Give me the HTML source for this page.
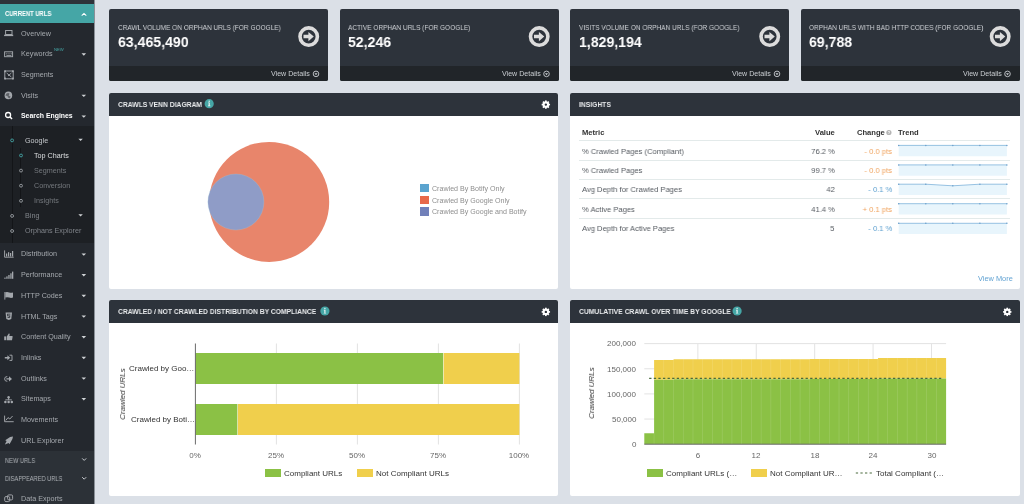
<!DOCTYPE html><html><head><meta charset="utf-8"><style>
html,body{margin:0;padding:0;}
body{width:1024px;height:504px;overflow:hidden;position:relative;background:#dbe0e7;font-family:"Liberation Sans", sans-serif;}
.t{position:absolute;white-space:nowrap;will-change:transform;}
svg{position:absolute;overflow:visible;}
</style></head><body>
<div style="position:absolute;left:0px;top:0px;width:94px;height:504px;background:#24282e;"></div>
<div style="position:absolute;left:94px;top:0px;width:1px;height:504px;background:#8a9097;"></div>
<div style="position:absolute;left:0px;top:0px;width:94px;height:4.2px;background:#2e333a;"></div>
<div style="position:absolute;left:0px;top:4.2px;width:94px;height:18.7px;background:#45a6a6;"></div>
<div class="t" style="left:4.80px;transform-origin:0 0;transform: scaleX(0.93);top:11px;font-size:6.3px;line-height:6.3px;color:#ffffff;font-weight:700;">CURRENT URLS</div>
<svg style="left:0;top:0" width="95" height="30"><path d="M81.7 15.6 L84 13.4 L86.3 15.6" stroke="#fff" stroke-width="1.05" fill="none"/></svg>
<div class="t" style="left:21.30px;transform-origin:0 0;top:30px;font-size:7.2px;line-height:7.2px;color:#a5a9ae;font-weight:400;">Overview</div>
<div class="t" style="left:21.30px;transform-origin:0 0;top:50px;font-size:7.2px;line-height:7.2px;color:#a5a9ae;font-weight:400;">Keywords</div>
<svg style="left:0;top:0" width="95" height="504"><path d="M81.50 53.30 L86.10 53.30 L83.80 55.70 Z" fill="#d0d3d6"/></svg>
<div class="t" style="left:21.30px;transform-origin:0 0;top:71px;font-size:7.2px;line-height:7.2px;color:#a5a9ae;font-weight:400;">Segments</div>
<div class="t" style="left:21.30px;transform-origin:0 0;top:92px;font-size:7.2px;line-height:7.2px;color:#a5a9ae;font-weight:400;">Visits</div>
<svg style="left:0;top:0" width="95" height="504"><path d="M81.50 94.70 L86.10 94.70 L83.80 97.10 Z" fill="#d0d3d6"/></svg>
<div class="t" style="left:21.30px;transform-origin:0 0;top:113px;font-size:6.9px;line-height:6.9px;color:#ffffff;font-weight:700;">Search Engines</div>
<svg style="left:0;top:0" width="95" height="504"><path d="M81.50 115.40 L86.10 115.40 L83.80 117.80 Z" fill="#d0d3d6"/></svg>
<div class="t" style="left:54.00px;transform-origin:0 0;top:48px;font-size:4.2px;line-height:4.2px;color:#45a6a6;font-weight:400;">NEW</div>
<div style="position:absolute;left:0px;top:126px;width:94px;height:117.4px;background:#1d2024;"></div>
<div style="position:absolute;left:11.6px;top:126px;width:1px;height:117.4px;background:#131518;"></div>
<div style="position:absolute;left:19.8px;top:147.8px;width:1px;height:59.4px;background:#131518;"></div>
<div class="t" style="left:25.00px;transform-origin:0 0;top:137px;font-size:7.2px;line-height:7.2px;color:#c4c7cb;font-weight:400;">Google</div>
<svg style="left:0;top:0" width="95" height="504"><circle cx="12.1" cy="140.40" r="1.45" stroke="#45a6a6" stroke-width="0.9" fill="#1d2024"/></svg>
<svg style="left:0;top:0" width="95" height="504"><path d="M78.40 138.75 L82.80 138.75 L80.60 141.05 Z" fill="#d0d3d6"/></svg>
<div class="t" style="left:34.00px;transform-origin:0 0;top:152px;font-size:7.2px;line-height:7.2px;color:#dcdee0;font-weight:400;">Top Charts</div>
<svg style="left:0;top:0" width="95" height="504"><circle cx="21" cy="155.50" r="1.45" stroke="#45a6a6" stroke-width="0.9" fill="#1d2024"/></svg>
<div class="t" style="left:34.00px;transform-origin:0 0;top:167px;font-size:7.2px;line-height:7.2px;color:#74787d;font-weight:400;">Segments</div>
<svg style="left:0;top:0" width="95" height="504"><circle cx="21" cy="170.60" r="1.45" stroke="#9a9ea3" stroke-width="0.9" fill="#1d2024"/></svg>
<div class="t" style="left:34.00px;transform-origin:0 0;top:182px;font-size:7.2px;line-height:7.2px;color:#74787d;font-weight:400;">Conversion</div>
<svg style="left:0;top:0" width="95" height="504"><circle cx="21" cy="185.70" r="1.45" stroke="#9a9ea3" stroke-width="0.9" fill="#1d2024"/></svg>
<div class="t" style="left:34.00px;transform-origin:0 0;top:197px;font-size:7.2px;line-height:7.2px;color:#74787d;font-weight:400;">Insights</div>
<svg style="left:0;top:0" width="95" height="504"><circle cx="21" cy="200.80" r="1.45" stroke="#9a9ea3" stroke-width="0.9" fill="#1d2024"/></svg>
<div class="t" style="left:25.00px;transform-origin:0 0;top:212px;font-size:7.2px;line-height:7.2px;color:#80848a;font-weight:400;">Bing</div>
<svg style="left:0;top:0" width="95" height="504"><circle cx="12.1" cy="215.90" r="1.45" stroke="#9a9ea3" stroke-width="0.9" fill="#1d2024"/></svg>
<svg style="left:0;top:0" width="95" height="504"><path d="M78.40 214.25 L82.80 214.25 L80.60 216.55 Z" fill="#d0d3d6"/></svg>
<div class="t" style="left:25.00px;transform-origin:0 0;top:227px;font-size:7.2px;line-height:7.2px;color:#80848a;font-weight:400;">Orphans Explorer</div>
<svg style="left:0;top:0" width="95" height="504"><circle cx="12.1" cy="231.00" r="1.45" stroke="#9a9ea3" stroke-width="0.9" fill="#1d2024"/></svg>
<div class="t" style="left:21.30px;transform-origin:0 0;top:250px;font-size:7.2px;line-height:7.2px;color:#a5a9ae;font-weight:400;">Distribution</div>
<svg style="left:0;top:0" width="95" height="504"><path d="M81.50 253.40 L86.10 253.40 L83.80 255.80 Z" fill="#d0d3d6"/></svg>
<div class="t" style="left:21.30px;transform-origin:0 0;top:271px;font-size:7.2px;line-height:7.2px;color:#a5a9ae;font-weight:400;">Performance</div>
<svg style="left:0;top:0" width="95" height="504"><path d="M81.50 274.07 L86.10 274.07 L83.80 276.47 Z" fill="#d0d3d6"/></svg>
<div class="t" style="left:21.30px;transform-origin:0 0;top:292px;font-size:7.2px;line-height:7.2px;color:#a5a9ae;font-weight:400;">HTTP Codes</div>
<svg style="left:0;top:0" width="95" height="504"><path d="M81.50 294.74 L86.10 294.74 L83.80 297.14 Z" fill="#d0d3d6"/></svg>
<div class="t" style="left:21.30px;transform-origin:0 0;top:313px;font-size:7.2px;line-height:7.2px;color:#a5a9ae;font-weight:400;">HTML Tags</div>
<svg style="left:0;top:0" width="95" height="504"><path d="M81.50 315.41 L86.10 315.41 L83.80 317.81 Z" fill="#d0d3d6"/></svg>
<div class="t" style="left:21.30px;transform-origin:0 0;top:333px;font-size:7.2px;line-height:7.2px;color:#a5a9ae;font-weight:400;">Content Quality</div>
<svg style="left:0;top:0" width="95" height="504"><path d="M81.50 336.08 L86.10 336.08 L83.80 338.48 Z" fill="#d0d3d6"/></svg>
<div class="t" style="left:21.30px;transform-origin:0 0;top:354px;font-size:7.2px;line-height:7.2px;color:#a5a9ae;font-weight:400;">Inlinks</div>
<svg style="left:0;top:0" width="95" height="504"><path d="M81.50 356.75 L86.10 356.75 L83.80 359.15 Z" fill="#d0d3d6"/></svg>
<div class="t" style="left:21.30px;transform-origin:0 0;top:375px;font-size:7.2px;line-height:7.2px;color:#a5a9ae;font-weight:400;">Outlinks</div>
<svg style="left:0;top:0" width="95" height="504"><path d="M81.50 377.42 L86.10 377.42 L83.80 379.82 Z" fill="#d0d3d6"/></svg>
<div class="t" style="left:21.30px;transform-origin:0 0;top:395px;font-size:7.2px;line-height:7.2px;color:#a5a9ae;font-weight:400;">Sitemaps</div>
<svg style="left:0;top:0" width="95" height="504"><path d="M81.50 398.09 L86.10 398.09 L83.80 400.49 Z" fill="#d0d3d6"/></svg>
<div class="t" style="left:21.30px;transform-origin:0 0;top:416px;font-size:7.2px;line-height:7.2px;color:#a5a9ae;font-weight:400;">Movements</div>
<div class="t" style="left:21.30px;transform-origin:0 0;top:437px;font-size:7.2px;line-height:7.2px;color:#a5a9ae;font-weight:400;">URL Explorer</div>
<div style="position:absolute;left:0px;top:450.8px;width:94px;height:53.2px;background:#2c3137;"></div>
<div class="t" style="left:4.70px;transform-origin:0 0;transform: scaleX(0.865);top:458px;font-size:6.6px;line-height:6.6px;color:#aeb2b7;font-weight:400;">NEW URLS</div>
<div class="t" style="left:4.70px;transform-origin:0 0;transform: scaleX(0.865);top:476px;font-size:6.6px;line-height:6.6px;color:#aeb2b7;font-weight:400;">DISAPPEARED URLS</div>
<svg style="left:0;top:0" width="95" height="504"><path d="M82.2 458.4 L84.2 460.4 L86.2 458.4" stroke="#c8cbcf" stroke-width="1" fill="none"/></svg>
<svg style="left:0;top:0" width="95" height="504"><path d="M82.2 477.2 L84.2 479.2 L86.2 477.2" stroke="#c8cbcf" stroke-width="1" fill="none"/></svg>
<div class="t" style="left:21.30px;transform-origin:0 0;top:495px;font-size:7.2px;line-height:7.2px;color:#a5a9ae;font-weight:400;">Data Exports</div>
<svg style="left:0;top:0" width="95" height="504">
<g fill="none" stroke="#a3a7ac" stroke-width="0.95">
<rect x="5.6" y="30.5" width="6.4" height="4"/>
<rect x="4.6" y="51.8" width="8" height="4.9"/>
<rect x="4.8" y="71" width="8.4" height="7.8"/>
<path d="M6.6 73 L11.4 77 M11.4 73 L8 76"/>
<path d="M4.6 250.4 V257.2 H13.7"/>
<path d="M9.5 355.2 H12 V360.4 H9.5"/>
<path d="M7.3 376.5 Q4.6 376.6 4.6 378.9 Q4.6 381.3 7.3 381.3"/>
<rect x="4.7" y="496.6" width="5" height="5" rx="1.2"/>
<rect x="7.6" y="494.9" width="5" height="5" rx="1.2"/>
<path d="M4.6 421.7 H13.7 M4.6 415.6 V421.7 M5.8 420.4 L8 417.6 L9.8 419 L12.6 416"/>
</g>
<g fill="#a3a7ac">
<rect x="4.1" y="34.7" width="9.1" height="1.4"/>
<rect x="5.8" y="53.4" width="1" height="0.9"/><rect x="7.6" y="53.4" width="1" height="0.9"/><rect x="9.4" y="53.4" width="1" height="0.9"/><rect x="11" y="53.4" width="0.8" height="0.9"/><rect x="6.4" y="55" width="5" height="0.8"/>
<rect x="4.2" y="70.4" width="1.8" height="1.8"/><rect x="12" y="70.4" width="1.8" height="1.8"/><rect x="4.2" y="77.6" width="1.8" height="1.8"/><rect x="12" y="77.6" width="1.8" height="1.8"/>
<circle cx="8.4" cy="95.4" r="3.8"/>
<rect x="6" y="253.5" width="1.2" height="3"/><rect x="8" y="252.2" width="1.2" height="4.3"/><rect x="10" y="253" width="1.2" height="3.5"/><rect x="12" y="251" width="1.2" height="5.5"/>
<rect x="4.3" y="277.6" width="1.3" height="1.2"/><rect x="6.3" y="276.4" width="1.3" height="2.4"/><rect x="8.3" y="275" width="1.3" height="3.8"/><rect x="10.3" y="273.3" width="1.3" height="5.5"/><rect x="12" y="271.6" width="1.3" height="7.2"/>
<rect x="4.4" y="292" width="0.9" height="7.6"/><path d="M5.3 292.3 Q7.5 291.6 9.2 292.5 Q11 293.2 13 292.5 V297.6 Q11 298.3 9.2 297.6 Q7.5 296.8 5.3 297.5 Z"/>
<path d="M5.6 312.4 H12 L11.3 319 L8.8 319.9 L6.3 319 Z"/><path d="M7.2 313.8 H10.4 V314.6 H8 V315.6 H10.3 L10.1 317.6 L8.8 318.1 L7.5 317.6 L7.4 316.9 H8.2 L8.3 317.1 L8.8 317.3 L9.3 317.1 L9.4 316.3 H7.3 Z" fill="#24282e"/>
<rect x="4.2" y="336.4" width="2" height="3.8"/><path d="M6.8 336.4 L8.8 333.6 Q9.8 333.4 9.7 334.6 L9.3 336 H12.2 Q12.8 336.2 12.6 337 L12 340.2 H6.8 Z"/>
<path d="M4.8 357 H7.4 V355.3 L10.2 357.8 L7.4 360.3 V358.6 H4.8 Z"/>
<path d="M6.4 378.2 H9 V376.3 L12 378.9 L9 381.5 V379.6 H6.4 Z"/>
<circle cx="8.6" cy="397.2" r="1.2"/><rect x="8.1" y="398" width="1" height="1.8"/><rect x="5.4" y="399.4" width="6.4" height="0.9"/>
<circle cx="5.4" cy="402" r="1.25"/><circle cx="8.6" cy="402" r="1.25"/><circle cx="11.8" cy="402" r="1.25"/>
<path d="M4.9 444.6 L6.6 441 L5.2 440.2 L7.5 438.8 Q10 436.7 13 436.6 Q12.8 439.6 10.8 442 L9.4 444.3 L8.6 442.9 Z"/>
</g>
<circle cx="8.1" cy="115" r="2.5" stroke="#fff" stroke-width="1.3" fill="none"/>
<path d="M9.9 116.8 L12 119.1" stroke="#fff" stroke-width="1.5"/>
<path d="M6.6 93.5 Q8.4 92.6 9.6 93.8 L8.6 95.4 L10.6 96.6 L9.6 98.6 Q7.6 97.6 7.4 96 L5.4 95.4 Z" fill="#24282e" opacity="0.55"/>
</svg>
<div style="position:absolute;left:109px;top:8.6px;width:219px;height:72px;background:#2d333b;border-radius:2px;overflow:hidden"><div style="position:absolute;left:0;right:0;top:57.0px;bottom:0;background:#212529"></div></div>
<div class="t" style="left:117.80px;transform-origin:0 0;transform: scaleX(0.836);top:24px;font-size:7.8px;line-height:7.8px;color:#d0d3d7;font-weight:400;">CRAWL VOLUME ON ORPHAN URLS (FOR GOOGLE)</div>
<div class="t" style="left:117.80px;transform-origin:0 0;transform: scaleX(0.91);top:34px;font-size:15.5px;line-height:15.5px;color:#ffffff;font-weight:700;">63,465,490</div>
<svg style="left:0;top:0" width="1024" height="100"><circle cx="308.7" cy="36.6" r="8.7" stroke="#dcdcdc" stroke-width="3.6" fill="none"/><path d="M303.5 34.8 H308.4 V32 L313.8 36.6 L308.4 41.3 V38.3 H303.5 Z" fill="#dcdcdc"/></svg>
<div class="t" style="right:713.75px;transform-origin:100% 0;top:71px;font-size:7.1px;line-height:7.1px;color:#c9cdd1;font-weight:400;">View Details</div>
<svg style="left:0;top:0" width="1024" height="100"><circle cx="316" cy="73.9" r="2.8" stroke="#c9cdd1" stroke-width="0.9" fill="none"/><path d="M314.5 73.2 L317.5 73.2 L316 75.2 Z" fill="#c9cdd1"/></svg>
<div style="position:absolute;left:339.5px;top:8.6px;width:219px;height:72px;background:#2d333b;border-radius:2px;overflow:hidden"><div style="position:absolute;left:0;right:0;top:57.0px;bottom:0;background:#212529"></div></div>
<div class="t" style="left:348.30px;transform-origin:0 0;transform: scaleX(0.836);top:24px;font-size:7.8px;line-height:7.8px;color:#d0d3d7;font-weight:400;">ACTIVE ORPHAN URLS (FOR GOOGLE)</div>
<div class="t" style="left:348.30px;transform-origin:0 0;transform: scaleX(0.91);top:34px;font-size:15.5px;line-height:15.5px;color:#ffffff;font-weight:700;">52,246</div>
<svg style="left:0;top:0" width="1024" height="100"><circle cx="539.2" cy="36.6" r="8.7" stroke="#dcdcdc" stroke-width="3.6" fill="none"/><path d="M534.0 34.8 H538.9 V32 L544.3 36.6 L538.9 41.3 V38.3 H534.0 Z" fill="#dcdcdc"/></svg>
<div class="t" style="right:483.25px;transform-origin:100% 0;top:71px;font-size:7.1px;line-height:7.1px;color:#c9cdd1;font-weight:400;">View Details</div>
<svg style="left:0;top:0" width="1024" height="100"><circle cx="546.5" cy="73.9" r="2.8" stroke="#c9cdd1" stroke-width="0.9" fill="none"/><path d="M545.0 73.2 L548.0 73.2 L546.5 75.2 Z" fill="#c9cdd1"/></svg>
<div style="position:absolute;left:570px;top:8.6px;width:219px;height:72px;background:#2d333b;border-radius:2px;overflow:hidden"><div style="position:absolute;left:0;right:0;top:57.0px;bottom:0;background:#212529"></div></div>
<div class="t" style="left:578.80px;transform-origin:0 0;transform: scaleX(0.836);top:24px;font-size:7.8px;line-height:7.8px;color:#d0d3d7;font-weight:400;">VISITS VOLUME ON ORPHAN URLS (FOR GOOGLE)</div>
<div class="t" style="left:578.80px;transform-origin:0 0;transform: scaleX(0.91);top:34px;font-size:15.5px;line-height:15.5px;color:#ffffff;font-weight:700;">1,829,194</div>
<svg style="left:0;top:0" width="1024" height="100"><circle cx="769.7" cy="36.6" r="8.7" stroke="#dcdcdc" stroke-width="3.6" fill="none"/><path d="M764.5 34.8 H769.4 V32 L774.8 36.6 L769.4 41.3 V38.3 H764.5 Z" fill="#dcdcdc"/></svg>
<div class="t" style="right:252.75px;transform-origin:100% 0;top:71px;font-size:7.1px;line-height:7.1px;color:#c9cdd1;font-weight:400;">View Details</div>
<svg style="left:0;top:0" width="1024" height="100"><circle cx="777" cy="73.9" r="2.8" stroke="#c9cdd1" stroke-width="0.9" fill="none"/><path d="M775.5 73.2 L778.5 73.2 L777 75.2 Z" fill="#c9cdd1"/></svg>
<div style="position:absolute;left:800.5px;top:8.6px;width:219px;height:72px;background:#2d333b;border-radius:2px;overflow:hidden"><div style="position:absolute;left:0;right:0;top:57.0px;bottom:0;background:#212529"></div></div>
<div class="t" style="left:809.30px;transform-origin:0 0;transform: scaleX(0.836);top:24px;font-size:7.8px;line-height:7.8px;color:#d0d3d7;font-weight:400;">ORPHAN URLS WITH BAD HTTP CODES (FOR GOOGLE)</div>
<div class="t" style="left:809.30px;transform-origin:0 0;transform: scaleX(0.91);top:34px;font-size:15.5px;line-height:15.5px;color:#ffffff;font-weight:700;">69,788</div>
<svg style="left:0;top:0" width="1024" height="100"><circle cx="1000.2" cy="36.6" r="8.7" stroke="#dcdcdc" stroke-width="3.6" fill="none"/><path d="M995.0 34.8 H999.9 V32 L1005.3 36.6 L999.9 41.3 V38.3 H995.0 Z" fill="#dcdcdc"/></svg>
<div class="t" style="right:22.25px;transform-origin:100% 0;top:71px;font-size:7.1px;line-height:7.1px;color:#c9cdd1;font-weight:400;">View Details</div>
<svg style="left:0;top:0" width="1024" height="100"><circle cx="1007.5" cy="73.9" r="2.8" stroke="#c9cdd1" stroke-width="0.9" fill="none"/><path d="M1006.0 73.2 L1009.0 73.2 L1007.5 75.2 Z" fill="#c9cdd1"/></svg>
<div style="position:absolute;left:109px;top:93.0px;width:449.4px;height:195.5px;background:#fff;border-radius:2px;overflow:hidden"><div style="position:absolute;left:0;right:0;top:0;height:22.6px;background:#2d333b"></div></div>
<div class="t" style="left:117.80px;transform-origin:0 0;transform: scaleX(0.9);top:101px;font-size:7.5px;line-height:7.5px;color:#e9ebed;font-weight:700;">CRAWLS VENN DIAGRAM</div>
<svg style="left:0;top:0" width="1024" height="504"><circle cx="209.2" cy="103.7" r="4.6" fill="#45a6a6"/><path d="M208.10 102.40 H209.80 V105.60 H210.40 V106.30 H208.00 V105.60 H208.60 V103.10 H208.10 Z" fill="#e8f4f4"/><circle cx="209.2" cy="101.20" r="0.7" fill="#e8f4f4"/></svg>
<svg style="left:0;top:0" width="1024" height="504"><g transform="translate(545.85,104.6)"><circle r="2.3" fill="none" stroke="#fff" stroke-width="2.2"/><g fill="#fff"><rect x="-0.8" y="-4.2" width="1.6" height="1.6" transform="rotate(0)"/><rect x="-0.8" y="-4.2" width="1.6" height="1.6" transform="rotate(45)"/><rect x="-0.8" y="-4.2" width="1.6" height="1.6" transform="rotate(90)"/><rect x="-0.8" y="-4.2" width="1.6" height="1.6" transform="rotate(135)"/><rect x="-0.8" y="-4.2" width="1.6" height="1.6" transform="rotate(180)"/><rect x="-0.8" y="-4.2" width="1.6" height="1.6" transform="rotate(225)"/><rect x="-0.8" y="-4.2" width="1.6" height="1.6" transform="rotate(270)"/><rect x="-0.8" y="-4.2" width="1.6" height="1.6" transform="rotate(315)"/></g></g></svg>
<div style="position:absolute;left:570px;top:93.0px;width:449.8px;height:195.5px;background:#fff;border-radius:2px;overflow:hidden"><div style="position:absolute;left:0;right:0;top:0;height:22.6px;background:#2d333b"></div></div>
<div class="t" style="left:578.80px;transform-origin:0 0;transform: scaleX(0.9);top:101px;font-size:7.5px;line-height:7.5px;color:#e9ebed;font-weight:700;">INSIGHTS</div>
<div style="position:absolute;left:109px;top:300.3px;width:449.4px;height:195.3px;background:#fff;border-radius:2px;overflow:hidden"><div style="position:absolute;left:0;right:0;top:0;height:22.6px;background:#2d333b"></div></div>
<div class="t" style="left:117.80px;transform-origin:0 0;transform: scaleX(0.9);top:308px;font-size:7.5px;line-height:7.5px;color:#e9ebed;font-weight:700;">CRAWLED / NOT CRAWLED DISTRIBUTION BY COMPLIANCE</div>
<svg style="left:0;top:0" width="1024" height="504"><circle cx="324.90000000000003" cy="311.0" r="4.6" fill="#45a6a6"/><path d="M323.80 309.70 H325.50 V312.90 H326.10 V313.60 H323.70 V312.90 H324.30 V310.40 H323.80 Z" fill="#e8f4f4"/><circle cx="324.90000000000003" cy="308.50" r="0.7" fill="#e8f4f4"/></svg>
<svg style="left:0;top:0" width="1024" height="504"><g transform="translate(545.85,311.90000000000003)"><circle r="2.3" fill="none" stroke="#fff" stroke-width="2.2"/><g fill="#fff"><rect x="-0.8" y="-4.2" width="1.6" height="1.6" transform="rotate(0)"/><rect x="-0.8" y="-4.2" width="1.6" height="1.6" transform="rotate(45)"/><rect x="-0.8" y="-4.2" width="1.6" height="1.6" transform="rotate(90)"/><rect x="-0.8" y="-4.2" width="1.6" height="1.6" transform="rotate(135)"/><rect x="-0.8" y="-4.2" width="1.6" height="1.6" transform="rotate(180)"/><rect x="-0.8" y="-4.2" width="1.6" height="1.6" transform="rotate(225)"/><rect x="-0.8" y="-4.2" width="1.6" height="1.6" transform="rotate(270)"/><rect x="-0.8" y="-4.2" width="1.6" height="1.6" transform="rotate(315)"/></g></g></svg>
<div style="position:absolute;left:570px;top:300.3px;width:449.8px;height:195.3px;background:#fff;border-radius:2px;overflow:hidden"><div style="position:absolute;left:0;right:0;top:0;height:22.6px;background:#2d333b"></div></div>
<div class="t" style="left:578.80px;transform-origin:0 0;transform: scaleX(0.9);top:308px;font-size:7.5px;line-height:7.5px;color:#e9ebed;font-weight:700;">CUMULATIVE CRAWL OVER TIME BY GOOGLE</div>
<svg style="left:0;top:0" width="1024" height="504"><circle cx="737.1" cy="311.0" r="4.6" fill="#45a6a6"/><path d="M736.00 309.70 H737.70 V312.90 H738.30 V313.60 H735.90 V312.90 H736.50 V310.40 H736.00 Z" fill="#e8f4f4"/><circle cx="737.1" cy="308.50" r="0.7" fill="#e8f4f4"/></svg>
<svg style="left:0;top:0" width="1024" height="504"><g transform="translate(1007.25,311.90000000000003)"><circle r="2.3" fill="none" stroke="#fff" stroke-width="2.2"/><g fill="#fff"><rect x="-0.8" y="-4.2" width="1.6" height="1.6" transform="rotate(0)"/><rect x="-0.8" y="-4.2" width="1.6" height="1.6" transform="rotate(45)"/><rect x="-0.8" y="-4.2" width="1.6" height="1.6" transform="rotate(90)"/><rect x="-0.8" y="-4.2" width="1.6" height="1.6" transform="rotate(135)"/><rect x="-0.8" y="-4.2" width="1.6" height="1.6" transform="rotate(180)"/><rect x="-0.8" y="-4.2" width="1.6" height="1.6" transform="rotate(225)"/><rect x="-0.8" y="-4.2" width="1.6" height="1.6" transform="rotate(270)"/><rect x="-0.8" y="-4.2" width="1.6" height="1.6" transform="rotate(315)"/></g></g></svg>
<svg style="left:0;top:0" width="1024" height="504"><circle cx="269.2" cy="201.9" r="60" fill="#e8856b"/><circle cx="235.9" cy="202" r="28" fill="#8f9cc7"/><circle cx="235.9" cy="202" r="28" fill="none" stroke="#9ec5dd" stroke-width="0.5" opacity="0.6"/></svg>
<div style="position:absolute;left:420px;top:183.8px;width:8.8px;height:8.4px;background:#5ba4cf;"></div>
<div class="t" style="left:431.70px;transform-origin:0 0;top:186px;font-size:7.1px;line-height:7.1px;color:#8e8e8e;font-weight:400;">Crawled By Botify Only</div>
<div style="position:absolute;left:420px;top:195.5px;width:8.8px;height:8.4px;background:#e8694a;"></div>
<div class="t" style="left:431.70px;transform-origin:0 0;top:198px;font-size:7.1px;line-height:7.1px;color:#8e8e8e;font-weight:400;">Crawled By Google Only</div>
<div style="position:absolute;left:420px;top:207.20000000000002px;width:8.8px;height:8.4px;background:#7180b9;"></div>
<div class="t" style="left:431.70px;transform-origin:0 0;top:209px;font-size:7.1px;line-height:7.1px;color:#8e8e8e;font-weight:400;">Crawled By Google and Botify</div>
<div class="t" style="left:581.50px;transform-origin:0 0;top:129px;font-size:7.6px;line-height:7.6px;color:#333;font-weight:700;">Metric</div>
<div class="t" style="right:189.60px;transform-origin:100% 0;top:129px;font-size:7.6px;line-height:7.6px;color:#333;font-weight:700;">Value</div>
<div class="t" style="right:139.40px;transform-origin:100% 0;top:129px;font-size:7.6px;line-height:7.6px;color:#333;font-weight:700;">Change</div>
<svg style="left:0;top:0" width="1024" height="504"><circle cx="888.9" cy="132.5" r="2.6" fill="#b5b5b5"/><text x="888.9" y="134.2" font-size="4" fill="#fff" text-anchor="middle" font-family="Liberation Sans" font-weight="700">?</text></svg>
<div class="t" style="left:898.30px;transform-origin:0 0;top:129px;font-size:7.6px;line-height:7.6px;color:#333;font-weight:700;">Trend</div>
<div style="position:absolute;left:578.5px;top:139.7px;width:431px;height:1px;background:#e3eaea;"></div>
<div style="position:absolute;left:578.5px;top:159.5px;width:431px;height:1px;background:#e3eaea;"></div>
<div style="position:absolute;left:578.5px;top:179.0px;width:431px;height:1px;background:#e3eaea;"></div>
<div style="position:absolute;left:578.5px;top:198.1px;width:431px;height:1px;background:#e3eaea;"></div>
<div style="position:absolute;left:578.5px;top:217.6px;width:431px;height:1px;background:#e3eaea;"></div>
<div class="t" style="left:581.50px;transform-origin:0 0;transform: scaleX(0.95);top:148px;font-size:8.0px;line-height:8.0px;color:#555a60;font-weight:400;">% Crawled Pages (Compliant)</div>
<div class="t" style="right:189.60px;transform-origin:100% 0;transform: scaleX(0.95);top:148px;font-size:8.0px;line-height:8.0px;color:#555a60;font-weight:400;">76.2 %</div>
<div class="t" style="right:132.10px;transform-origin:100% 0;transform: scaleX(0.95);top:148px;font-size:8.0px;line-height:8.0px;color:#f0a35e;font-weight:400;">- 0.0 pts</div>
<svg style="left:0;top:0" width="1024" height="504"><path d="M898.7 145.4 L898.7,145.4 L925.8,145.4 L952.8,145.4 L979.9,145.4 L1006.9,145.4 L1006.9 156.20000000000002 L898.7 156.20000000000002 Z" fill="#e8f5fc"/><polyline points="898.7,145.4 925.8,145.4 952.8,145.4 979.9,145.4 1006.9,145.4" fill="none" stroke="#7eb2da" stroke-width="0.8"/><circle cx="898.7" cy="145.4" r="0.75" fill="#6a9fcb"/><circle cx="925.8" cy="145.4" r="0.75" fill="#6a9fcb"/><circle cx="952.8" cy="145.4" r="0.75" fill="#6a9fcb"/><circle cx="979.9" cy="145.4" r="0.75" fill="#6a9fcb"/><circle cx="1006.9" cy="145.4" r="0.75" fill="#6a9fcb"/></svg>
<div class="t" style="left:581.50px;transform-origin:0 0;transform: scaleX(0.95);top:167px;font-size:8.0px;line-height:8.0px;color:#555a60;font-weight:400;">% Crawled Pages</div>
<div class="t" style="right:189.60px;transform-origin:100% 0;transform: scaleX(0.95);top:167px;font-size:8.0px;line-height:8.0px;color:#555a60;font-weight:400;">99.7 %</div>
<div class="t" style="right:132.10px;transform-origin:100% 0;transform: scaleX(0.95);top:167px;font-size:8.0px;line-height:8.0px;color:#f0a35e;font-weight:400;">- 0.0 pts</div>
<svg style="left:0;top:0" width="1024" height="504"><path d="M898.7 164.9 L898.7,164.9 L925.8,164.9 L952.8,164.9 L979.9,164.9 L1006.9,164.9 L1006.9 175.70000000000002 L898.7 175.70000000000002 Z" fill="#e8f5fc"/><polyline points="898.7,164.9 925.8,164.9 952.8,164.9 979.9,164.9 1006.9,164.9" fill="none" stroke="#7eb2da" stroke-width="0.8"/><circle cx="898.7" cy="164.9" r="0.75" fill="#6a9fcb"/><circle cx="925.8" cy="164.9" r="0.75" fill="#6a9fcb"/><circle cx="952.8" cy="164.9" r="0.75" fill="#6a9fcb"/><circle cx="979.9" cy="164.9" r="0.75" fill="#6a9fcb"/><circle cx="1006.9" cy="164.9" r="0.75" fill="#6a9fcb"/></svg>
<div class="t" style="left:581.50px;transform-origin:0 0;transform: scaleX(0.95);top:186px;font-size:8.0px;line-height:8.0px;color:#555a60;font-weight:400;">Avg Depth for Crawled Pages</div>
<div class="t" style="right:189.60px;transform-origin:100% 0;transform: scaleX(0.95);top:186px;font-size:8.0px;line-height:8.0px;color:#555a60;font-weight:400;">42</div>
<div class="t" style="right:132.10px;transform-origin:100% 0;transform: scaleX(0.95);top:186px;font-size:8.0px;line-height:8.0px;color:#5c9fcf;font-weight:400;">- 0.1 %</div>
<svg style="left:0;top:0" width="1024" height="504"><path d="M898.7 184.2 L898.7,184.2 L925.8,184.2 L952.8,185.8 L979.9,184.2 L1006.9,184.2 L1006.9 195.0 L898.7 195.0 Z" fill="#e8f5fc"/><polyline points="898.7,184.2 925.8,184.2 952.8,185.8 979.9,184.2 1006.9,184.2" fill="none" stroke="#7eb2da" stroke-width="0.8"/><circle cx="898.7" cy="184.2" r="0.75" fill="#6a9fcb"/><circle cx="925.8" cy="184.2" r="0.75" fill="#6a9fcb"/><circle cx="952.8" cy="185.8" r="0.75" fill="#6a9fcb"/><circle cx="979.9" cy="184.2" r="0.75" fill="#6a9fcb"/><circle cx="1006.9" cy="184.2" r="0.75" fill="#6a9fcb"/></svg>
<div class="t" style="left:581.50px;transform-origin:0 0;transform: scaleX(0.95);top:206px;font-size:8.0px;line-height:8.0px;color:#555a60;font-weight:400;">% Active Pages</div>
<div class="t" style="right:189.60px;transform-origin:100% 0;transform: scaleX(0.95);top:206px;font-size:8.0px;line-height:8.0px;color:#555a60;font-weight:400;">41.4 %</div>
<div class="t" style="right:132.10px;transform-origin:100% 0;transform: scaleX(0.95);top:206px;font-size:8.0px;line-height:8.0px;color:#f0a35e;font-weight:400;">+ 0.1 pts</div>
<svg style="left:0;top:0" width="1024" height="504"><path d="M898.7 203.7 L898.7,203.7 L925.8,203.7 L952.8,203.7 L979.9,203.7 L1006.9,203.7 L1006.9 214.5 L898.7 214.5 Z" fill="#e8f5fc"/><polyline points="898.7,203.7 925.8,203.7 952.8,203.7 979.9,203.7 1006.9,203.7" fill="none" stroke="#7eb2da" stroke-width="0.8"/><circle cx="898.7" cy="203.7" r="0.75" fill="#6a9fcb"/><circle cx="925.8" cy="203.7" r="0.75" fill="#6a9fcb"/><circle cx="952.8" cy="203.7" r="0.75" fill="#6a9fcb"/><circle cx="979.9" cy="203.7" r="0.75" fill="#6a9fcb"/><circle cx="1006.9" cy="203.7" r="0.75" fill="#6a9fcb"/></svg>
<div class="t" style="left:581.50px;transform-origin:0 0;transform: scaleX(0.95);top:225px;font-size:8.0px;line-height:8.0px;color:#555a60;font-weight:400;">Avg Depth for Active Pages</div>
<div class="t" style="right:189.60px;transform-origin:100% 0;transform: scaleX(0.95);top:225px;font-size:8.0px;line-height:8.0px;color:#555a60;font-weight:400;">5</div>
<div class="t" style="right:132.10px;transform-origin:100% 0;transform: scaleX(0.95);top:225px;font-size:8.0px;line-height:8.0px;color:#5c9fcf;font-weight:400;">- 0.1 %</div>
<svg style="left:0;top:0" width="1024" height="504"><path d="M898.7 223.3 L898.7,223.3 L925.8,223.3 L952.8,223.3 L979.9,223.3 L1006.9,223.3 L1006.9 234.10000000000002 L898.7 234.10000000000002 Z" fill="#e8f5fc"/><polyline points="898.7,223.3 925.8,223.3 952.8,223.3 979.9,223.3 1006.9,223.3" fill="none" stroke="#7eb2da" stroke-width="0.8"/><circle cx="898.7" cy="223.3" r="0.75" fill="#6a9fcb"/><circle cx="925.8" cy="223.3" r="0.75" fill="#6a9fcb"/><circle cx="952.8" cy="223.3" r="0.75" fill="#6a9fcb"/><circle cx="979.9" cy="223.3" r="0.75" fill="#6a9fcb"/><circle cx="1006.9" cy="223.3" r="0.75" fill="#6a9fcb"/></svg>
<div class="t" style="right:10.90px;transform-origin:100% 0;top:275px;font-size:7.4px;line-height:7.4px;color:#62a3d3;font-weight:400;">View More</div>
<svg style="left:0;top:0" width="1024" height="504"><rect x="275.9" y="343.5" width="1" height="101" fill="#e3e3e3"/><rect x="356.9" y="343.5" width="1" height="101" fill="#e3e3e3"/><rect x="437.9" y="343.5" width="1" height="101" fill="#e3e3e3"/><rect x="518.9" y="343.5" width="1" height="101" fill="#e3e3e3"/><rect x="195.4" y="353" width="247.79999999999998" height="31" fill="#8bc145"/><rect x="443.7" y="353" width="75.69999999999999" height="31" fill="#f0cf4c"/><rect x="195.4" y="404" width="42.0" height="31" fill="#8bc145"/><rect x="237.9" y="404" width="281.5" height="31" fill="#f0cf4c"/><rect x="194.9" y="343.5" width="1" height="101" fill="#6b6b6b"/></svg>
<div class="t" style="right:829.20px;transform-origin:100% 0;top:365px;font-size:8.0px;line-height:8.0px;color:#333;font-weight:400;">Crawled by Goo…</div>
<div class="t" style="right:829.20px;transform-origin:100% 0;top:416px;font-size:8.0px;line-height:8.0px;color:#333;font-weight:400;">Crawled by Boti…</div>
<div class="t" style="left:195.40px;transform:translateX(-50%);top:452px;font-size:8.0px;line-height:8.0px;color:#666;font-weight:400;">0%</div>
<div class="t" style="left:276.40px;transform:translateX(-50%);top:452px;font-size:8.0px;line-height:8.0px;color:#666;font-weight:400;">25%</div>
<div class="t" style="left:357.40px;transform:translateX(-50%);top:452px;font-size:8.0px;line-height:8.0px;color:#666;font-weight:400;">50%</div>
<div class="t" style="left:438.40px;transform:translateX(-50%);top:452px;font-size:8.0px;line-height:8.0px;color:#666;font-weight:400;">75%</div>
<div class="t" style="left:519.40px;transform:translateX(-50%);top:452px;font-size:8.0px;line-height:8.0px;color:#666;font-weight:400;">100%</div>
<div class="t" style="left:122.8px;top:393.8px;font-size:8px;line-height:8px;color:#333;font-style:italic;transform:translate(-50%,-50%) rotate(-90deg)">Crawled URLs</div>
<div style="position:absolute;left:265.2px;top:468.8px;width:15.8px;height:8.4px;background:#8bc145;"></div>
<div class="t" style="left:284.30px;transform-origin:0 0;top:470px;font-size:8.0px;line-height:8.0px;color:#333;font-weight:400;">Compliant URLs</div>
<div style="position:absolute;left:357px;top:468.8px;width:15.8px;height:8.4px;background:#f0cf4c;"></div>
<div class="t" style="left:376.00px;transform-origin:0 0;top:470px;font-size:8.0px;line-height:8.0px;color:#333;font-weight:400;">Not Compliant URLs</div>
<svg style="left:0;top:0" width="1024" height="504"><rect x="644.3" y="418.55" width="301.80" height="1" fill="#e3e3e3"/><rect x="644.3" y="393.40" width="301.80" height="1" fill="#e3e3e3"/><rect x="644.3" y="368.25" width="301.80" height="1" fill="#e3e3e3"/><rect x="644.3" y="343.10" width="301.80" height="1" fill="#e3e3e3"/><rect x="697.35" y="343.6" width="1" height="100.6" fill="#e3e3e3"/><rect x="755.76" y="343.6" width="1" height="100.6" fill="#e3e3e3"/><rect x="814.17" y="343.6" width="1" height="100.6" fill="#e3e3e3"/><rect x="872.58" y="343.6" width="1" height="100.6" fill="#e3e3e3"/><rect x="931.00" y="343.6" width="1" height="100.6" fill="#e3e3e3"/><path d="M644.30 433.13 H654.04 V433.13 H644.30 Z M654.04 359.95 H663.77 V379.82 H654.04 Z M663.77 359.95 H673.51 V379.82 H663.77 Z M673.51 359.29 H683.24 V379.21 H673.51 Z M683.24 359.29 H692.98 V379.21 H683.24 Z M692.98 359.29 H702.71 V379.21 H692.98 Z M702.71 359.29 H712.45 V379.21 H702.71 Z M712.45 359.29 H722.18 V379.21 H712.45 Z M722.18 359.29 H731.92 V379.21 H722.18 Z M731.92 359.29 H741.65 V379.21 H731.92 Z M741.65 359.29 H751.39 V379.21 H741.65 Z M751.39 359.29 H761.13 V379.21 H751.39 Z M761.13 359.29 H770.86 V379.21 H761.13 Z M770.86 359.29 H780.60 V379.21 H770.86 Z M780.60 359.29 H790.33 V379.21 H780.60 Z M790.33 359.29 H800.07 V379.21 H790.33 Z M800.07 359.29 H809.80 V379.21 H800.07 Z M809.80 358.89 H819.54 V378.91 H809.80 Z M819.54 358.89 H829.27 V378.91 H819.54 Z M829.27 358.89 H839.01 V378.91 H829.27 Z M839.01 358.89 H848.75 V378.91 H839.01 Z M848.75 358.89 H858.48 V378.91 H848.75 Z M858.48 358.89 H868.22 V378.91 H858.48 Z M868.22 358.89 H877.95 V378.91 H868.22 Z M877.95 358.09 H887.69 V378.61 H877.95 Z M887.69 358.09 H897.42 V378.61 H887.69 Z M897.42 358.09 H907.16 V378.61 H897.42 Z M907.16 358.09 H916.89 V378.61 H907.16 Z M916.89 358.09 H926.63 V378.61 H916.89 Z M926.63 358.09 H936.36 V378.61 H926.63 Z M936.36 358.09 H946.10 V378.61 H936.36 Z " fill="#f0cf4c"/><path d="M644.30 444.2 L644.30 433.13 L654.04 433.13 L654.04 379.82 L663.77 379.82 L663.77 379.82 L673.51 379.82 L673.51 379.21 L683.24 379.21 L683.24 379.21 L692.98 379.21 L692.98 379.21 L702.71 379.21 L702.71 379.21 L712.45 379.21 L712.45 379.21 L722.18 379.21 L722.18 379.21 L731.92 379.21 L731.92 379.21 L741.65 379.21 L741.65 379.21 L751.39 379.21 L751.39 379.21 L761.13 379.21 L761.13 379.21 L770.86 379.21 L770.86 379.21 L780.60 379.21 L780.60 379.21 L790.33 379.21 L790.33 379.21 L800.07 379.21 L800.07 379.21 L809.80 379.21 L809.80 378.91 L819.54 378.91 L819.54 378.91 L829.27 378.91 L829.27 378.91 L839.01 378.91 L839.01 378.91 L848.75 378.91 L848.75 378.91 L858.48 378.91 L858.48 378.91 L868.22 378.91 L868.22 378.91 L877.95 378.91 L877.95 378.61 L887.69 378.61 L887.69 378.61 L897.42 378.61 L897.42 378.61 L907.16 378.61 L907.16 378.61 L916.89 378.61 L916.89 378.61 L926.63 378.61 L926.63 378.61 L936.36 378.61 L936.36 378.61 L946.10 378.61 L946.10 444.2 Z" fill="#8bc145"/><rect x="653.74" y="359.95" width="0.6" height="84.25" fill="#fff" opacity="0.18"/><rect x="663.47" y="359.95" width="0.6" height="84.25" fill="#fff" opacity="0.18"/><rect x="673.21" y="359.29" width="0.6" height="84.91" fill="#fff" opacity="0.18"/><rect x="682.94" y="359.29" width="0.6" height="84.91" fill="#fff" opacity="0.18"/><rect x="692.68" y="359.29" width="0.6" height="84.91" fill="#fff" opacity="0.18"/><rect x="702.41" y="359.29" width="0.6" height="84.91" fill="#fff" opacity="0.18"/><rect x="712.15" y="359.29" width="0.6" height="84.91" fill="#fff" opacity="0.18"/><rect x="721.88" y="359.29" width="0.6" height="84.91" fill="#fff" opacity="0.18"/><rect x="731.62" y="359.29" width="0.6" height="84.91" fill="#fff" opacity="0.18"/><rect x="741.35" y="359.29" width="0.6" height="84.91" fill="#fff" opacity="0.18"/><rect x="751.09" y="359.29" width="0.6" height="84.91" fill="#fff" opacity="0.18"/><rect x="760.83" y="359.29" width="0.6" height="84.91" fill="#fff" opacity="0.18"/><rect x="770.56" y="359.29" width="0.6" height="84.91" fill="#fff" opacity="0.18"/><rect x="780.30" y="359.29" width="0.6" height="84.91" fill="#fff" opacity="0.18"/><rect x="790.03" y="359.29" width="0.6" height="84.91" fill="#fff" opacity="0.18"/><rect x="799.77" y="359.29" width="0.6" height="84.91" fill="#fff" opacity="0.18"/><rect x="809.50" y="358.89" width="0.6" height="85.31" fill="#fff" opacity="0.18"/><rect x="819.24" y="358.89" width="0.6" height="85.31" fill="#fff" opacity="0.18"/><rect x="828.97" y="358.89" width="0.6" height="85.31" fill="#fff" opacity="0.18"/><rect x="838.71" y="358.89" width="0.6" height="85.31" fill="#fff" opacity="0.18"/><rect x="848.45" y="358.89" width="0.6" height="85.31" fill="#fff" opacity="0.18"/><rect x="858.18" y="358.89" width="0.6" height="85.31" fill="#fff" opacity="0.18"/><rect x="867.92" y="358.89" width="0.6" height="85.31" fill="#fff" opacity="0.18"/><rect x="877.65" y="358.09" width="0.6" height="86.11" fill="#fff" opacity="0.18"/><rect x="887.39" y="358.09" width="0.6" height="86.11" fill="#fff" opacity="0.18"/><rect x="897.12" y="358.09" width="0.6" height="86.11" fill="#fff" opacity="0.18"/><rect x="906.86" y="358.09" width="0.6" height="86.11" fill="#fff" opacity="0.18"/><rect x="916.59" y="358.09" width="0.6" height="86.11" fill="#fff" opacity="0.18"/><rect x="926.33" y="358.09" width="0.6" height="86.11" fill="#fff" opacity="0.18"/><rect x="936.06" y="358.09" width="0.6" height="86.11" fill="#fff" opacity="0.18"/><path d="M649.17 378.3 H941.23" stroke="#4a6a3c" stroke-width="1.15" stroke-dasharray="2.3 2.3"/><rect x="644.3" y="443.7" width="301.80" height="1" fill="#6b6b6b"/></svg>
<div class="t" style="right:387.80px;transform-origin:100% 0;top:441px;font-size:8.0px;line-height:8.0px;color:#666;font-weight:400;">0</div>
<div class="t" style="right:387.80px;transform-origin:100% 0;top:416px;font-size:8.0px;line-height:8.0px;color:#666;font-weight:400;">50,000</div>
<div class="t" style="right:387.80px;transform-origin:100% 0;top:391px;font-size:8.0px;line-height:8.0px;color:#666;font-weight:400;">100,000</div>
<div class="t" style="right:387.80px;transform-origin:100% 0;top:366px;font-size:8.0px;line-height:8.0px;color:#666;font-weight:400;">150,000</div>
<div class="t" style="right:387.80px;transform-origin:100% 0;top:340px;font-size:8.0px;line-height:8.0px;color:#666;font-weight:400;">200,000</div>
<div class="t" style="left:697.85px;transform:translateX(-50%);top:452px;font-size:8.0px;line-height:8.0px;color:#666;font-weight:400;">6</div>
<div class="t" style="left:756.26px;transform:translateX(-50%);top:452px;font-size:8.0px;line-height:8.0px;color:#666;font-weight:400;">12</div>
<div class="t" style="left:814.67px;transform:translateX(-50%);top:452px;font-size:8.0px;line-height:8.0px;color:#666;font-weight:400;">18</div>
<div class="t" style="left:873.08px;transform:translateX(-50%);top:452px;font-size:8.0px;line-height:8.0px;color:#666;font-weight:400;">24</div>
<div class="t" style="left:931.50px;transform:translateX(-50%);top:452px;font-size:8.0px;line-height:8.0px;color:#666;font-weight:400;">30</div>
<div class="t" style="left:592px;top:393.4px;font-size:8px;line-height:8px;color:#333;font-style:italic;transform:translate(-50%,-50%) rotate(-90deg)">Crawled URLs</div>
<div style="position:absolute;left:646.7px;top:469px;width:16px;height:8.3px;background:#8bc145;"></div>
<div class="t" style="left:665.80px;transform-origin:0 0;top:470px;font-size:8.0px;line-height:8.0px;color:#333;font-weight:400;">Compliant URLs (…</div>
<div style="position:absolute;left:751.2px;top:469px;width:16px;height:8.3px;background:#f0cf4c;"></div>
<div class="t" style="left:770.30px;transform-origin:0 0;top:470px;font-size:8.0px;line-height:8.0px;color:#333;font-weight:400;">Not Compliant UR…</div>
<svg style="left:0;top:0" width="1024" height="504"><path d="M855.8 473 H872.4" stroke="#4a6a3c" stroke-width="1.15" stroke-dasharray="2.3 2.3"/></svg>
<div class="t" style="left:875.50px;transform-origin:0 0;top:470px;font-size:8.0px;line-height:8.0px;color:#333;font-weight:400;">Total Compliant (…</div>
</body></html>
